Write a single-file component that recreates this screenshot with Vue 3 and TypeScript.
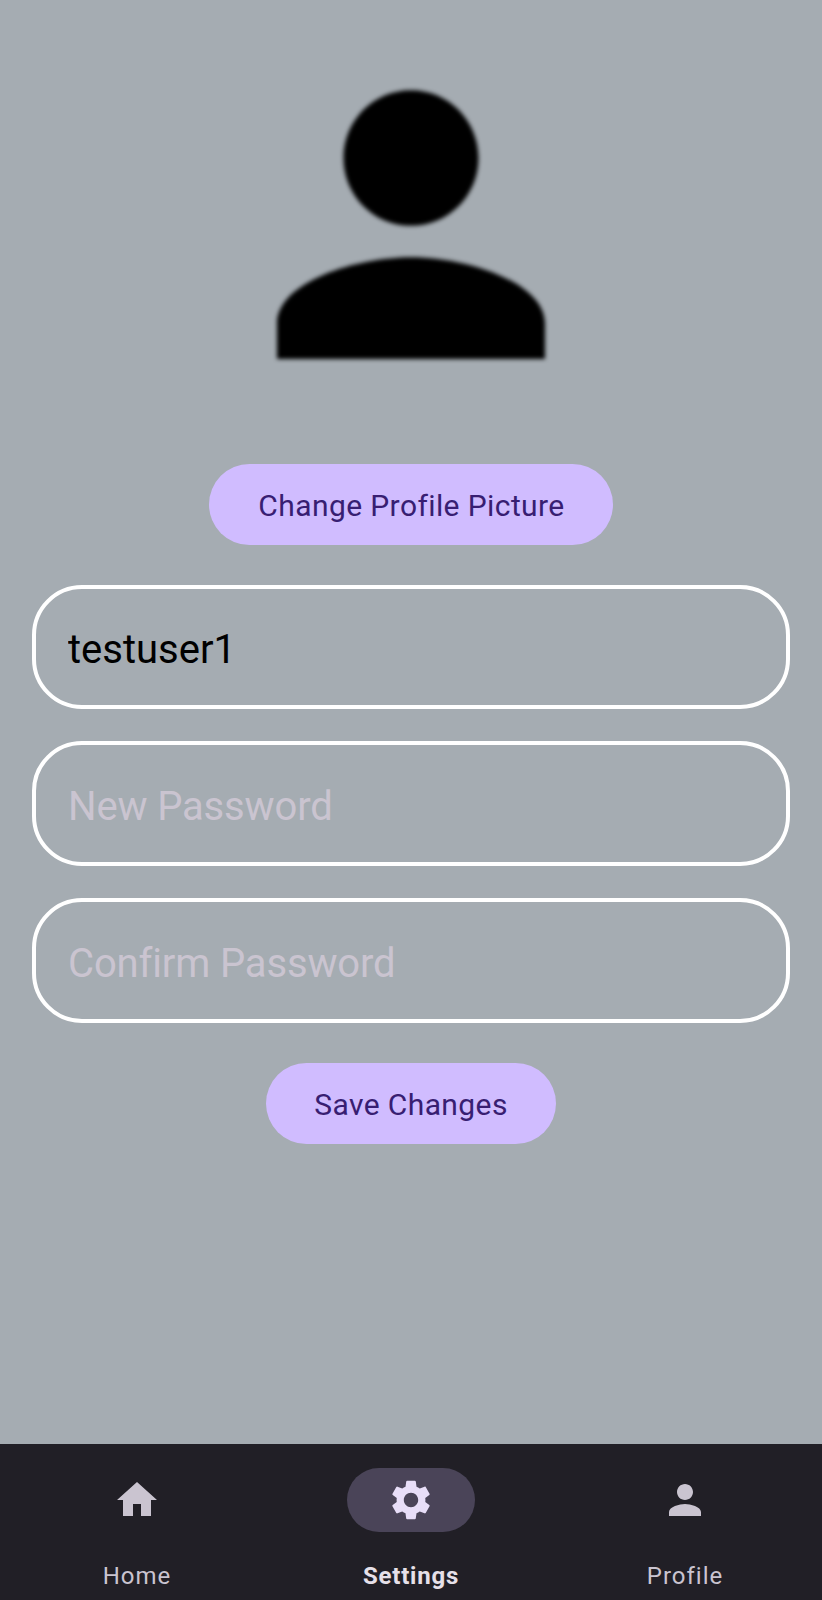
<script setup lang="ts">
import { ref } from 'vue'

interface NavItem {
  label: string
  icon: string
}

const username = ref('testuser1')
const newPassword = ref('')
const confirmPassword = ref('')
const active = ref('Settings')

const personIcon =
  'M12 12c2.21 0 4-1.79 4-4s-1.79-4-4-4-4 1.79-4 4 1.79 4 4 4zM12 14c-2.67 0-8 1.34-8 4v2h16v-2c0-2.66-5.33-4-8-4z'

const avatarIcon =
  'M12 12.05c2.24 0 4.03-1.81 4.03-4.05s-1.79-4.05-4.03-4.05-4.03 1.81-4.03 4.05 1.79 4.05 4.03 4.05zM12 13.92c-3.2 0-8 1.45-8 3.98v2.1h16v-2.1c0-2.53-4.8-3.98-8-3.98z'

const navItems: NavItem[] = [
  { label: 'Home', icon: 'M10 20v-6h4v6h5v-8h3L12 3 2 12h3v8z' },
  {
    label: 'Settings',
    icon: 'M19.14 12.94c.04-.3.06-.61.06-.94 0-.32-.02-.64-.07-.94l2.03-1.58c.18-.14.23-.41.12-.61l-1.92-3.32c-.12-.22-.37-.29-.59-.22l-2.39.96c-.5-.38-1.03-.7-1.62-.94L14.4 2.81c-.04-.24-.24-.41-.48-.41h-3.84c-.24 0-.43.17-.47.41L9.25 5.35c-.59.24-1.13.57-1.62.94l-2.39-.96c-.22-.08-.47 0-.59.22L2.74 8.87c-.12.21-.08.47.12.61l2.03 1.58c-.05.3-.09.63-.09.94s.02.64.07.94l-2.03 1.58c-.18.14-.23.41-.12.61l1.92 3.32c.12.22.37.29.59.22l2.39-.96c.5.38 1.03.7 1.62.94l.36 2.54c.05.24.24.41.48.41h3.84c.24 0 .44-.17.47-.41l.36-2.54c.59-.24 1.13-.56 1.62-.94l2.39.96c.22.08.47 0 .59-.22l1.92-3.32c.12-.22.07-.47-.12-.61l-2.01-1.58zM12 15.6c-1.98 0-3.6-1.62-3.6-3.6s1.62-3.6 3.6-3.6 3.6 1.62 3.6 3.6-1.62 3.6-3.6 3.6z',
  },
  { label: 'Profile', icon: personIcon },
]
</script>

<template>
  <div class="screen">
    <main class="content">
      <svg class="avatar" viewBox="0 0 24 24" aria-label="Profile picture">
        <path :d="avatarIcon" />
      </svg>
      <button class="btn change" type="button">Change Profile Picture</button>
      <form class="fields" @submit.prevent>
        <input v-model="username" class="field" type="text" />
        <input v-model="newPassword" class="field secret" type="password" placeholder="New Password" />
        <input v-model="confirmPassword" class="field secret" type="password" placeholder="Confirm Password" />
      </form>
      <button class="btn save" type="button">Save Changes</button>
    </main>
    <nav class="nav">
      <button
        v-for="item in navItems"
        :key="item.label"
        type="button"
        class="nav-item"
        :class="{ active: item.label === active }"
        @click="active = item.label"
      >
        <span class="pill">
          <svg class="nav-icon" viewBox="0 0 24 24"><path :d="item.icon" /></svg>
        </span>
        <span class="label">{{ item.label }}</span>
      </button>
    </nav>
  </div>
</template>

<style>
body {
  margin: 0;
  background: #a5acb2;
}
</style>

<style scoped>
.screen {
  display: flex;
  flex-direction: column;
  height: 1600px;
  overflow: hidden;
  background: #a5acb2;
  font-family: Roboto, "Liberation Sans", sans-serif;
}

.content {
  flex: 1;
  display: flex;
  flex-direction: column;
  align-items: center;
  padding: 24px 32px 0;
}

.avatar {
  width: 402px;
  height: 402px;
  flex: none;
  filter: blur(2px);
}

.btn {
  height: 81px;
  padding: 3px 0 0 1px;
  border: 0;
  border-radius: 41px;
  background: #d0bcff;
  color: #381e72;
  font: 400 30px/36px Roboto, "Liberation Sans", sans-serif;
  letter-spacing: 0.4px;
}

.change {
  width: 404px;
  margin-top: 38px;
}

.save {
  width: 290px;
  margin-top: 40px;
  padding-top: 4px;
  padding-left: 0;
}

.fields {
  display: flex;
  flex-direction: column;
  gap: 32px;
  width: 100%;
  margin-top: 39.5px;
}

.field {
  box-sizing: border-box;
  width: 100%;
  height: 124.8px;
  padding: 6px 32px 0;
  border: 4px solid #fff;
  border-radius: 50px;
  outline: 0;
  background: transparent;
  color: #000;
  font: 400 40px/48px Roboto, "Liberation Sans", sans-serif;
  font-variant-ligatures: none;
}

.secret {
  letter-spacing: -0.15px;
}

.field::placeholder {
  color: #cac4d0;
  opacity: 1;
}

.nav {
  display: flex;
  height: 156px;
  background: #211f26;
}

.nav-item {
  flex: 1;
  display: flex;
  flex-direction: column;
  align-items: center;
  padding: 24px 0 0;
  border: 0;
  background: transparent;
  color: #cac4d0;
  font: 400 24px/30px Roboto, "Liberation Sans", sans-serif;
  letter-spacing: 1px;
}

.pill {
  display: flex;
  align-items: center;
  justify-content: center;
  width: 128px;
  height: 64px;
  border-radius: 32px;
}

.nav-icon {
  width: 48px;
  height: 48px;
  fill: #cac4d0;
}

.label {
  margin-top: 29px;
}

.active .pill {
  background: #4a4458;
}

.active .nav-icon {
  fill: #e8def8;
}

.active .label {
  color: #e6e0e9;
  font-weight: 700;
  letter-spacing: 0.8px;
}
</style>
